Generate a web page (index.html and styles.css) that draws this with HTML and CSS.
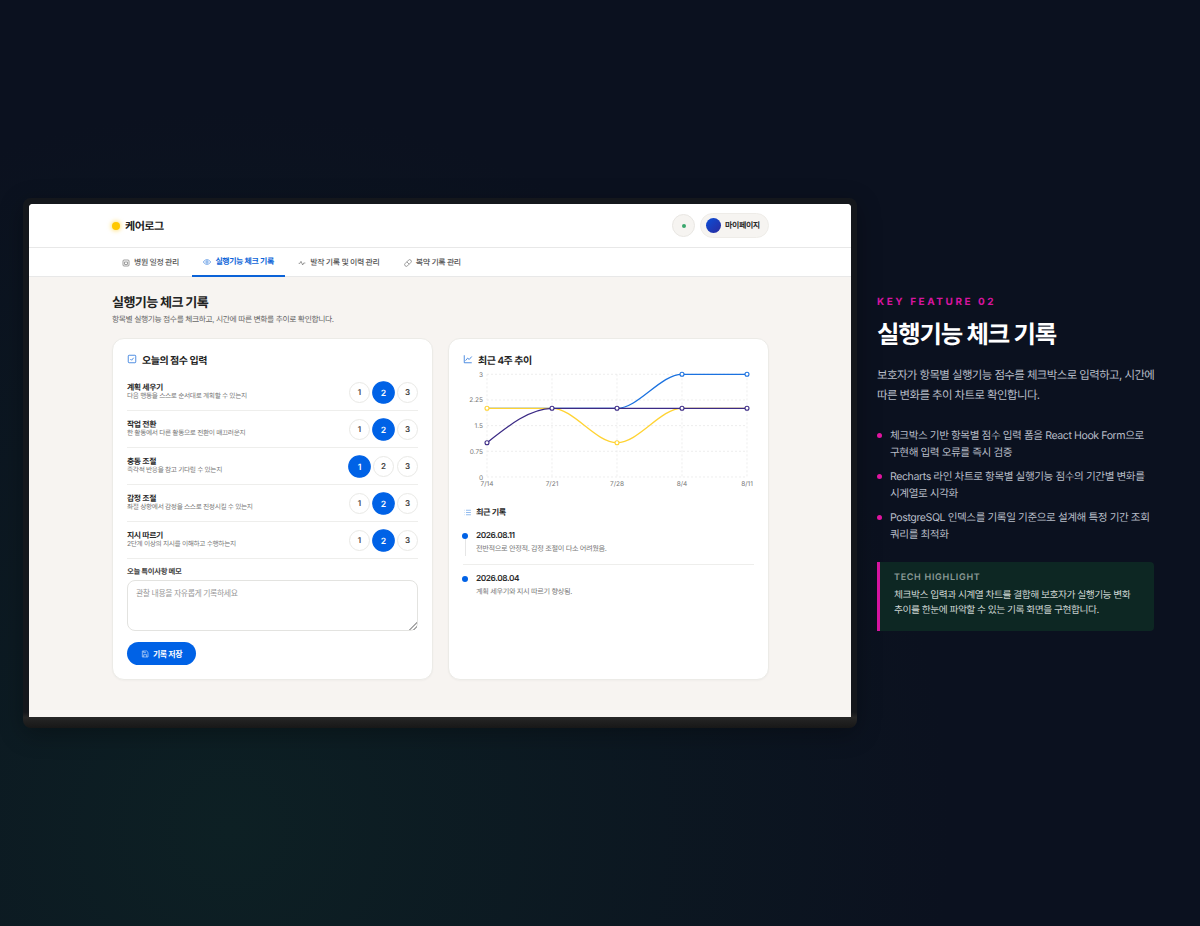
FILE: index.html

```html
<!DOCTYPE html>
<html lang="ko">
<head>
    <meta charset="UTF-8">
    <meta name="viewport" content="width=device-width, initial-scale=1.0">
    <title>실행기능 체크 기록</title>
    <link rel="stylesheet" href="styles.css">
</head>
<body>
    <div class="slide">
        <div class="frame">
            <div class="app">
                <header class="app-header">
                    <div class="logo"><span class="logo-dot"></span>케어로그</div>
                    <div class="header-actions">
                        <div class="status-btn"><span class="status-dot"></span></div>
                        <div class="my-pill"><span class="avatar"></span>마이페이지</div>
                    </div>
                </header>
                <nav class="tabs">
                    <div class="tab">
                        <svg class="tab-icon" viewBox="0 0 24 24"><rect x="3" y="3" width="18" height="18" rx="3"/><rect x="8" y="9" width="8" height="7"/></svg>
                        병원 일정 관리
                    </div>
                    <div class="tab active">
                        <svg class="tab-icon" viewBox="0 0 24 24"><path d="M1 12s4-7 11-7 11 7 11 7-4 7-11 7-11-7-11-7z"/><circle cx="12" cy="12" r="3.500"/></svg>
                        실행기능 체크 기록
                    </div>
                    <div class="tab">
                        <svg class="tab-icon" viewBox="0 0 24 24"><path d="M2 13h4l3-6 5 11 3-6h5"/></svg>
                        발작 기록 및 이력 관리
                    </div>
                    <div class="tab">
                        <svg class="tab-icon" viewBox="0 0 24 24"><path d="M10.500 20.500l10-10a4.950 4.950 0 1 0-7-7l-10 10a4.950 4.950 0 1 0 7 7z"/><path d="M8.500 8.500l7 7"/></svg>
                        복약 기록 관리
                    </div>
                </nav>
                <main class="content">
                    <h1 class="page-title">실행기능 체크 기록</h1>
                    <p class="page-sub">항목별 실행기능 점수를 체크하고, 시간에 따른 변화를 추이로 확인합니다.</p>
                    <div class="cards">
                        <section class="card">
                            <h2 class="card-title">
                                <svg class="title-icon" viewBox="0 0 24 24"><rect x="3" y="3" width="18" height="18" rx="2"/><path d="M8 12l3 3 5-6"/></svg>
                                오늘의 점수 입력
                            </h2>
                            <div class="score-list">
                                <div class="score-row">
                                    <div class="score-info"><div class="score-name">계획 세우기</div><div class="score-desc">다음 행동을 스스로 순서대로 계획할 수 있는지</div></div>
                                    <div class="score-btns"><span class="score-btn">1</span><span class="score-btn on">2</span><span class="score-btn">3</span></div>
                                </div>
                                <div class="score-row">
                                    <div class="score-info"><div class="score-name">작업 전환</div><div class="score-desc">한 활동에서 다른 활동으로 전환이 매끄러운지</div></div>
                                    <div class="score-btns"><span class="score-btn">1</span><span class="score-btn on">2</span><span class="score-btn">3</span></div>
                                </div>
                                <div class="score-row">
                                    <div class="score-info"><div class="score-name">충동 조절</div><div class="score-desc">즉각적 반응을 참고 기다릴 수 있는지</div></div>
                                    <div class="score-btns"><span class="score-btn on">1</span><span class="score-btn">2</span><span class="score-btn">3</span></div>
                                </div>
                                <div class="score-row">
                                    <div class="score-info"><div class="score-name">감정 조절</div><div class="score-desc">좌절 상황에서 감정을 스스로 진정시킬 수 있는지</div></div>
                                    <div class="score-btns"><span class="score-btn">1</span><span class="score-btn on">2</span><span class="score-btn">3</span></div>
                                </div>
                                <div class="score-row">
                                    <div class="score-info"><div class="score-name">지시 따르기</div><div class="score-desc">2단계 이상의 지시를 이해하고 수행하는지</div></div>
                                    <div class="score-btns"><span class="score-btn">1</span><span class="score-btn on">2</span><span class="score-btn">3</span></div>
                                </div>
                            </div>
                            <label class="memo-label" for="memo">오늘 특이사항 메모</label>
                            <textarea class="memo" id="memo" placeholder="관찰 내용을 자유롭게 기록하세요"></textarea>
                            <button class="save-btn">
                                <svg class="save-icon" viewBox="0 0 24 24"><path d="M4 3h13l4 4v14H4z"/><path d="M8 21v-7h9v7M8 3v5h7"/></svg>
                                기록 저장
                            </button>
                        </section>
                        <section class="card">
                            <h2 class="card-title">
                                <svg class="title-icon" viewBox="0 0 24 24"><path d="M3 3v18h18"/><path d="M6 16l5-6 4 3 6-7"/></svg>
                                최근 4주 추이
                            </h2>
                            <svg class="chart" viewBox="463 368 292 124">
                                <g class="grid">
                                    <path d="M487 374.3H747M487 400H747M487 425.6H747M487 451.3H747M487 477H747"/>
                                    <path d="M487 374.3V477M552 374.3V477M617 374.3V477M682 374.3V477M747 374.3V477"/>
                                </g>
                                <g class="ticks">
                                    <text x="483" y="376.500" text-anchor="end">3</text>
                                    <text x="483" y="402.300" text-anchor="end">2.25</text>
                                    <text x="483" y="428" text-anchor="end">1.5</text>
                                    <text x="483" y="453.700" text-anchor="end">0.75</text>
                                    <text x="483" y="479.500" text-anchor="end">0</text>
                                    <text x="487" y="486" text-anchor="middle">7/14</text>
                                    <text x="552" y="486" text-anchor="middle">7/21</text>
                                    <text x="617" y="486" text-anchor="middle">7/28</text>
                                    <text x="682" y="486" text-anchor="middle">8/4</text>
                                    <text x="747" y="486" text-anchor="middle">8/11</text>
                                </g>
                                <g class="series blue">
                                    <path d="M487 408.3H617C638.67 408.3 660.33 374.3 682 374.3H747"/>
                                    <circle cx="682" cy="374.3" r="2"/><circle cx="747" cy="374.3" r="2"/>
                                </g>
                                <g class="series yellow">
                                    <path d="M487 408.3H552C573.67 408.3 595.33 442.7 617 442.7C638.67 442.7 660.33 408.3 682 408.3H747"/>
                                    <circle cx="487" cy="408.3" r="2"/><circle cx="617" cy="442.7" r="2"/>
                                </g>
                                <g class="series purple">
                                    <path d="M487 442.7C508.67 425.5 530.33 408.3 552 408.3H747"/>
                                    <circle cx="487" cy="442.7" r="2"/><circle cx="552" cy="408.3" r="2"/><circle cx="617" cy="408.3" r="2"/><circle cx="682" cy="408.3" r="2"/><circle cx="747" cy="408.3" r="2"/>
                                </g>
                            </svg>
                            <h3 class="recent-title">
                                <svg class="recent-icon" viewBox="0 0 24 24"><path d="M8 6h13M8 12h13M8 18h13M3 6h1M3 12h1M3 18h1"/></svg>
                                최근 기록
                            </h3>
                            <div class="log">
                                <span class="log-dot"></span>
                                <div class="log-date">2026.08.11</div>
                                <div class="log-text">전반적으로 안정적. 감정 조절이 다소 어려웠음.</div>
                            </div>
                            <div class="log last">
                                <span class="log-dot"></span>
                                <div class="log-date">2026.08.04</div>
                                <div class="log-text">계획 세우기와 지시 따르기 향상됨.</div>
                            </div>
                        </section>
                    </div>
                </main>
            </div>
        </div>
        <aside class="feature">
            <div class="feature-kicker">KEY FEATURE 02</div>
            <h2 class="feature-title">실행기능 체크 기록</h2>
            <p class="feature-desc">보호자가 항목별 실행기능 점수를 체크박스로 입력하고, 시간에 따른 변화를 추이 차트로 확인합니다.</p>
            <ul class="feature-list">
                <li>체크박스 기반 항목별 점수 입력 폼을 React Hook Form으로 구현해 입력 오류를 즉시 검증</li>
                <li>Recharts 라인 차트로 항목별 실행기능 점수의 기간별 변화를 시계열로 시각화</li>
                <li>PostgreSQL 인덱스를 기록일 기준으로 설계해 특정 기간 조회 쿼리를 최적화</li>
            </ul>
            <div class="highlight">
                <div class="highlight-title">TECH HIGHLIGHT</div>
                <p class="highlight-text">체크박스 입력과 시계열 차트를 결합해 보호자가 실행기능 변화 추이를 한눈에 파악할 수 있는 기록 화면을 구현합니다.</p>
            </div>
        </aside>
    </div>
</body>
</html>
```

FILE: styles.css

```css
* { margin: 0; padding: 0; box-sizing: border-box; letter-spacing: -0.05em; }
body {
    font-family: Inter, "Noto Sans CJK KR", sans-serif;
    background: #0b111f;
    color: #222;
    word-break: keep-all;
    text-rendering: geometricPrecision;
}
.slide {
    width: 1200px;
    height: 926px;
    padding-left: 23px;
    display: flex;
    align-items: center;
    gap: 20px;
    overflow: hidden;
    background: radial-gradient(circle 720px at 230px 830px, #0d2024 0%, rgba(11,17,31,0) 100%), #0b111f;
}
.frame {
    width: 834px;
    height: 530px;
    flex-shrink: 0;
    padding: 6px 6px 11px;
    background: linear-gradient(180deg, #14171c 0%, #14171c 97%, #262626 98%, #171717 100%);
    border-radius: 8px;
    box-shadow: 0 6px 24px rgba(0,0,0,0.3);
}
.app {
    height: 100%;
    background: #f7f4f1;
    border-radius: 4px 4px 0 0;
    overflow: hidden;
}
.app-header {
    height: 44px;
    padding: 0 82px;
    display: flex;
    align-items: center;
    justify-content: space-between;
    background: #fff;
    border-bottom: 1px solid #e8e8e8;
}
.logo {
    display: flex;
    align-items: center;
    gap: 5px;
    font-size: 11.100px;
    font-weight: 700;
    color: #1c1c1c;
}
.logo-dot {
    width: 8px;
    height: 8px;
    margin-left: 1px;
    border-radius: 50%;
    background: #ffc800;
    box-shadow: 0 0 4px 1px rgba(255,205,40,0.6);
}
.header-actions {
    display: flex;
    align-items: center;
    gap: 5px;
}
.status-btn {
    width: 23px;
    height: 23px;
    display: flex;
    align-items: center;
    justify-content: center;
    background: #f6f4f1;
    border: 1px solid #e9e7e3;
    border-radius: 50%;
}
.status-dot {
    width: 4px;
    height: 4px;
    border-radius: 50%;
    background: #3aa76d;
}
.my-pill {
    height: 25px;
    width: 69px;
    padding-left: 5px;
    display: flex;
    align-items: center;
    gap: 4px;
    font-size: 8px;
    font-weight: 600;
    color: #2a2a2a;
    background: #f6f4f1;
    border: 1px solid #eeece8;
    border-radius: 13px;
}
.avatar {
    width: 15px;
    height: 15px;
    border-radius: 50%;
    background: linear-gradient(135deg, #0b4fd8, #2a2a9e);
}
.tabs {
    height: 29px;
    padding-left: 82px;
    display: flex;
    gap: 2.500px;
    background: #fff;
    border-bottom: 1px solid #e8e8e8;
}
.tab {
    height: 29px;
    padding: 0 11px;
    display: flex;
    align-items: center;
    gap: 4px;
    font-size: 7.950px;
    font-weight: 500;
    color: #555;
}
.tab.active {
    color: #0b63d8;
    font-weight: 600;
    border-bottom: 2px solid #0b63d8;
}
.tab-icon {
    width: 8px;
    height: 8px;
    fill: none;
    stroke: currentColor;
    stroke-width: 2;
    opacity: 0.85;
}
.content {
    padding: 18px 82px 0 83px;
}
.page-title {
    font-size: 13.100px;
    line-height: 16px;
    font-weight: 700;
    color: #222;
}
.page-sub {
    margin-top: 2px;
    font-size: 7.800px;
    line-height: 12px;
    color: #666;
}
.cards {
    margin-top: 13px;
    display: grid;
    grid-template-columns: 321px 321px;
    gap: 15px;
}
.card {
    height: 342px;
    padding: 13px 14px;
    background: #fff;
    border: 1px solid #ecebe7;
    border-radius: 12px;
    box-shadow: 0 1px 2px rgba(0,0,0,0.03);
}
.card-title {
    display: flex;
    align-items: center;
    gap: 5px;
    height: 14px;
    font-size: 10px;
    font-weight: 600;
    color: #222;
}
.title-icon {
    width: 10px;
    height: 10px;
    fill: none;
    stroke: #2f78dc;
    stroke-width: 2;
}
.score-list {
    margin-top: 8px;
}
.score-row {
    height: 37px;
    display: flex;
    align-items: center;
    justify-content: space-between;
    border-bottom: 1px solid #eeeeec;
}
.score-info {
    padding-bottom: 2px;
}
.score-name {
    font-size: 7.900px;
    line-height: 10px;
    font-weight: 600;
    color: #2a2a2a;
}
.score-desc {
    font-size: 6.700px;
    line-height: 9px;
    color: #777;
}
.score-btns {
    display: flex;
    gap: 3px;
}
.score-btn {
    width: 21px;
    height: 21px;
    display: flex;
    align-items: center;
    justify-content: center;
    font-size: 8px;
    font-weight: 600;
    letter-spacing: 0;
    color: #444;
    background: #fff;
    border: 1px solid #e9e9e6;
    border-radius: 50%;
}
.score-btn.on {
    color: #fff;
    background: #0062e6;
    border-color: #0062e6;
    transform: scale(1.08);
}
.memo-label {
    display: block;
    margin-top: 7px;
    font-size: 7.400px;
    line-height: 11px;
    font-weight: 600;
    color: #444;
}
.memo {
    display: block;
    width: 100%;
    height: 51px;
    margin-top: 3px;
    padding: 6px 8px;
    font-family: inherit;
    font-size: 7.900px;
    line-height: 12px;
    border: 1px solid #e3e3e0;
    border-radius: 8px;
    outline: none;
}
.memo::placeholder {
    color: #999;
}
.memo::-webkit-resizer {
    background: linear-gradient(135deg, transparent 72%, #aaa 72% 77%, transparent 77% 86%, #aaa 86% 91%, transparent 91%);
}
.save-btn {
    width: 69px;
    height: 23px;
    margin-top: 11px;
    display: flex;
    align-items: center;
    justify-content: center;
    gap: 4px;
    font-family: inherit;
    font-size: 7.950px;
    font-weight: 600;
    color: #fff;
    background: #0062e6;
    border: none;
    border-radius: 12px;
}
.save-icon {
    width: 8px;
    height: 8px;
    fill: none;
    stroke: #fff;
    stroke-width: 2;
    opacity: 0.8;
}
.chart {
    display: block;
    width: 292px;
    height: 124px;
    margin-top: 2px;
}
.grid path {
    fill: none;
    stroke: #e6e6e6;
    stroke-width: 0.7;
    stroke-dasharray: 2 2;
}
.ticks text {
    font-size: 6.500px;
    letter-spacing: 0;
    fill: #777;
}
.series path {
    fill: none;
    stroke-width: 1.300;
}
.series circle {
    fill: #fff;
    stroke-width: 1.100;
}
.blue path, .blue circle { stroke: #1b72e0; }
.yellow path, .yellow circle { stroke: #ffd333; }
.purple path, .purple circle { stroke: #3b2a85; }
.recent-title {
    display: flex;
    align-items: center;
    gap: 4px;
    margin-top: 14px;
    height: 12px;
    font-size: 8.150px;
    font-weight: 600;
    color: #2a2a2a;
}
.recent-icon {
    width: 9px;
    height: 9px;
    fill: none;
    stroke: #6ea4e8;
    stroke-width: 2;
}
.log {
    position: relative;
    height: 35px;
    margin-top: 12px;
    padding: 1px 0 0 13px;
    border-bottom: 1px solid #eeeeec;
}
.log.last {
    margin-top: 8px;
    border-bottom: none;
}
.log:not(.last)::before {
    content: "";
    position: absolute;
    left: 2px;
    top: 8px;
    width: 1px;
    height: 18px;
    background: #e6e6e6;
}
.log-dot {
    position: absolute;
    left: -1px;
    top: 3px;
    width: 6px;
    height: 6px;
    border-radius: 50%;
    background: #0062e6;
}
.log-date {
    font-size: 8.300px;
    line-height: 11px;
    font-weight: 600;
    color: #2a2a2a;
}
.log-text {
    margin-top: 2px;
    font-size: 7.200px;
    line-height: 10px;
    color: #777;
}
.feature {
    width: 280px;
    flex-shrink: 0;
}
.feature-kicker {
    font-size: 10px;
    line-height: 12px;
    font-weight: 700;
    letter-spacing: 2.550px;
    color: #d6149f;
}
.feature-title {
    margin-top: 11px;
    font-size: 24.400px;
    line-height: 30px;
    font-weight: 700;
    color: #fff;
}
.feature-desc {
    margin-top: 16px;
    font-size: 11.450px;
    line-height: 20px;
    color: #b8bdc8;
}
.feature-list {
    margin-top: 22px;
    list-style: none;
}
.feature-list li {
    position: relative;
    margin-bottom: 7px;
    padding-left: 13px;
    font-size: 10.600px;
    line-height: 17px;
    letter-spacing: -0.04em;
    color: #b8bdc8;
}
.feature-list li::before {
    content: "";
    position: absolute;
    left: 0;
    top: 6px;
    width: 5px;
    height: 5px;
    border-radius: 50%;
    background: #e0149f;
}
.highlight {
    margin-top: 19px;
    width: 277px;
    height: 69px;
    padding: 10px 14px;
    background: #0d2723;
    border-left: 3px solid #d6149f;
    border-radius: 0 4px 4px 0;
}
.highlight-title {
    font-size: 9px;
    line-height: 12px;
    font-weight: 600;
    letter-spacing: 0.700px;
    color: #8a9a96;
}
.highlight-text {
    margin-top: 4px;
    font-size: 9.750px;
    line-height: 15.500px;
    color: #cdd6d3;
}
```
